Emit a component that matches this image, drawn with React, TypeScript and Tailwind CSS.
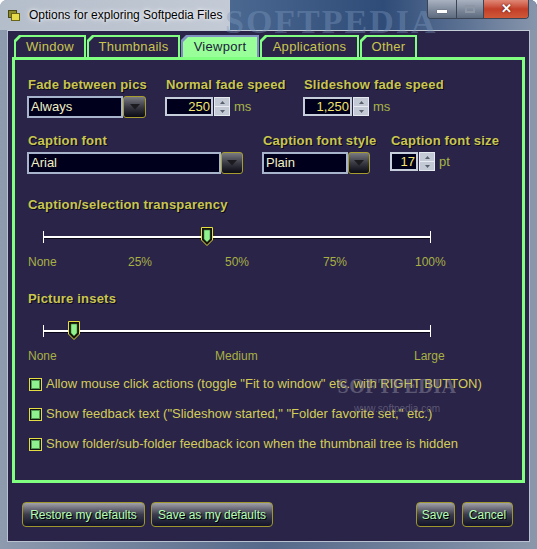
import React from "react";

const LABEL =
  "text-[13px] leading-4 font-bold text-[#c9c64e] tracking-[0.2px] pl-[1px] [text-shadow:1px_1px_0_#0b0920]";

function Combo({ box, btn, value }: { box: string; btn: string; value: string }) {
  return (
    <div className="flex h-[22px]">
      <div
        className={`${box} h-full bg-[#00001c] border-2 border-[#a7b4cc] flex items-center pl-[2px] text-[13px] text-[#f2f0c4]`}
      >
        {value}
      </div>
      <div
        className={`${btn} h-full rounded-[3px] border border-[#a69d2e] bg-gradient-to-b from-[#7a7a82] via-[#3a3a44] to-[#0c0c16] flex items-center justify-center`}
      >
        <svg width="10" height="6" viewBox="0 0 10 6">
          <path d="M0 0 H10 L5 5.5 Z" fill="#1b1b20" />
        </svg>
      </div>
    </div>
  );
}

function Spinner({ box, value, unit }: { box: string; value: string; unit: string }) {
  return (
    <div className="flex items-center h-[19px]">
      <div
        className={`${box} h-full bg-[#00001c] border-2 border-[#c6cedc] flex items-center justify-end pr-[1px] text-[13px] text-[#f2e46c]`}
      >
        {value}
      </div>
      <div className="w-[16px] h-full ml-[1px] flex flex-col border border-[#e4e9f0] bg-[#c3cad6]">
        <div className="flex-1 flex items-center justify-center border-b border-[#e8ecf2]">
          <svg width="5" height="3" viewBox="0 0 5 3">
            <path d="M0 3 H5 L2.5 0 Z" fill="#59606c" />
          </svg>
        </div>
        <div className="flex-1 flex items-center justify-center">
          <svg width="5" height="3" viewBox="0 0 5 3">
            <path d="M0 0 H5 L2.5 3 Z" fill="#59606c" />
          </svg>
        </div>
      </div>
      <span className="ml-[4px] text-[13px] text-[#a9b446]">{unit}</span>
    </div>
  );
}

function Slider({ thumb }: { thumb: number }) {
  return (
    <div className="relative ml-[16px] w-[388px] h-[24px] mt-[9px] pt-[14px]">
      <div className="h-[2px] bg-white shadow-[0_1px_0_#0a0818]" />
      <div className="absolute left-0 top-[9px] w-[1px] h-[12px] bg-white" />
      <div className="absolute right-0 top-[9px] w-[1px] h-[12px] bg-white" />
      <svg
        className="absolute top-[5px]"
        style={{ left: thumb }}
        width="12"
        height="19"
        viewBox="0 0 12 19"
      >
        <path d="M0.5 0.5 H11.5 V13 L6 18.5 L0.5 13 Z" fill="#15130c" stroke="#e6de3e" />
        <path d="M3 3 H9 V12 L6 15 L3 12 Z" fill="#8ff28f" stroke="#3e7a3e" strokeWidth="0.6" />
      </svg>
    </div>
  );
}

function Check({ text }: { text: string }) {
  return (
    <div className="flex items-center h-4 pl-[14px]">
      <div className="w-[13px] h-[13px] border border-[#e4dc44] bg-[#141414] p-[1px]">
        <div className="w-full h-full bg-[#8ef08e] border border-[#4f9a4f]" />
      </div>
      <span className="ml-[4px] text-[13px] text-[#d2cc58]">{text}</span>
    </div>
  );
}

function Tab({ label, w, active }: { label: string; w: string; active?: boolean }) {
  const clip = "[clip-path:polygon(5px_0,100%_0,100%_100%,0_100%,0_5px)]";
  return (
    <div className={`${w} h-[22px] ${active ? "bg-[#7f8fc0]" : "bg-[#82ff82]"} ${clip} pt-[2px] px-[2px]`}>
      <div
        className={`h-full ${active ? "bg-[#99ff99] text-[#1c1a3c]" : "bg-[#2a2448] text-[#c9c64e]"} ${clip} flex items-center justify-center text-[13px] tracking-[0.3px]`}
      >
        {label}
      </div>
    </div>
  );
}

function Btn({ label, w }: { label: string; w: string }) {
  return (
    <div
      className={`${w} h-[25px] rounded-[4px] border border-[#9f972e] bg-gradient-to-b from-[#a2a2aa] via-[#3c3c4c] to-[#12122a] flex items-center justify-center text-[12px] text-[#b4ffb4] [text-shadow:1px_1px_0_#000]`}
    >
      {label}
    </div>
  );
}

export default function App() {
  return (
    <div
      className="relative w-[537px] h-[549px] overflow-hidden rounded-t-[7px] bg-gradient-to-r from-[#8e9aae] via-[#56698a] to-[#8a97ab]"
      style={{ fontFamily: '"Liberation Sans", Arial, sans-serif' }}
    >
      {/* title bar */}
      <div className="relative h-[30px] flex items-center bg-gradient-to-r from-[#b4bdca] via-[#c6cdd8] to-[#3e5a82]">
        <div className="absolute inset-y-0 left-[230px] right-0 bg-gradient-to-r from-[#4a6890] via-[#2f4c78] to-[#8896ac]" />
        <span className="absolute left-[225px] top-[-4px] text-[34px] font-bold tracking-[2px] text-[#7f9ac0]/40 [font-family:'Liberation_Serif',serif]">
          SOFTPEDIA
        </span>
        <svg className="relative ml-[8px]" width="12" height="11" viewBox="0 0 12 11">
          <rect x="0.5" y="0.5" width="8" height="7" fill="#8d8a2a" stroke="#4a4812" />
          <rect x="3.5" y="3.5" width="8" height="7" fill="#e6dc4a" stroke="#6a6418" />
        </svg>
        <span className="relative ml-[9px] text-[12px] text-black [text-shadow:0_0_6px_#fff,0_0_3px_#fff]">
          Options for exploring Softpedia Files
        </span>
        <div className="absolute top-0 left-[427px] flex h-[19px] rounded-b-[4px] border border-t-0 border-[#3a4454] overflow-hidden">
          <div className="w-[29px] bg-gradient-to-b from-[#a9b2c0] to-[#5d6a7e] flex items-center justify-center border-r border-[#3a4454]">
            <div className="w-[10px] h-[3px] bg-white mt-[4px] shadow-[0_0_1px_#222]" />
          </div>
          <div className="w-[27px] bg-gradient-to-b from-[#a9b2c0] to-[#5d6a7e] flex items-center justify-center border-r border-[#3a4454]">
            <div className="w-[10px] h-[8px] border-2 border-[#8c96a4] border-t-[3px]" />
          </div>
          <div className="w-[44px] bg-gradient-to-b from-[#e08878] via-[#c23e28] to-[#d05838] flex items-center justify-center text-white font-bold text-[13px] [text-shadow:0_0_2px_#400]">
            ✕
          </div>
        </div>
      </div>

      {/* client area */}
      <div className="mx-[7px] h-[512px] bg-[#2a2448] border border-[#b8c2d0] border-t-[#c4ccd8]">
        <div className="flex gap-[1px] ml-[6px] mt-[4px]">
          <Tab label="Window" w="w-[72px]" />
          <Tab label="Thumbnails" w="w-[93px]" />
          <Tab label="Viewport" w="w-[78px]" active />
          <Tab label="Applications" w="w-[99px]" />
          <Tab label="Other" w="w-[57px]" />
        </div>

        <div className="ml-[4px] w-[513px] h-[426px] border-[3px] border-[#80ff80] pt-[17px] pl-[12px]">
          {/* row 1 */}
          <div className="flex">
            <div className="w-[138px]">
              <div className={LABEL}>Fade between pics</div>
              <div className="mt-[3px]">
                <Combo box="w-[96px]" btn="w-[23px]" value="Always" />
              </div>
            </div>
            <div className="w-[138px]">
              <div className={LABEL}>Normal fade speed</div>
              <div className="mt-[4px]">
                <Spinner box="w-[48px]" value="250" unit="ms" />
              </div>
            </div>
            <div>
              <div className={LABEL}>Slideshow fade speed</div>
              <div className="mt-[4px]">
                <Spinner box="w-[49px]" value="1,250" unit="ms" />
              </div>
            </div>
          </div>

          {/* row 2 */}
          <div className="flex mt-[15px]">
            <div className="w-[235px]">
              <div className={LABEL}>Caption font</div>
              <div className="mt-[3px]">
                <Combo box="w-[194px]" btn="w-[22px]" value="Arial" />
              </div>
            </div>
            <div className="w-[128px]">
              <div className={LABEL}>Caption font style</div>
              <div className="mt-[3px]">
                <Combo box="w-[86px]" btn="w-[22px]" value="Plain" />
              </div>
            </div>
            <div>
              <div className={LABEL}>Caption font size</div>
              <div className="mt-[3px]">
                <Spinner box="w-[28px]" value="17" unit="pt" />
              </div>
            </div>
          </div>

          {/* transparency */}
          <div className={`${LABEL} mt-[23px]`}>Caption/selection transparency</div>
          <Slider thumb={158} />
          <div className="grid grid-cols-[100px_97px_98px_92px_auto] mt-[9px] ml-[1px] text-[12px] leading-[14px] text-[#a8b044]">
            <span>None</span>
            <span>25%</span>
            <span>50%</span>
            <span>75%</span>
            <span>100%</span>
          </div>

          {/* insets */}
          <div className={`${LABEL} mt-[22px]`}>Picture insets</div>
          <Slider thumb={25} />
          <div className="grid grid-cols-[187px_199px_auto] mt-[9px] ml-[1px] text-[12px] leading-[14px] text-[#a8b044]">
            <span>None</span>
            <span>Medium</span>
            <span>Large</span>
          </div>

          {/* checks */}
          <div className="flex flex-col gap-[14px] mt-[13px] -ml-[12px]">
            <Check text={'Allow mouse click actions (toggle "Fit to window" etc. with RIGHT BUTTON)'} />
            <Check text={'Show feedback text ("Slideshow started," "Folder favorite set," etc.)'} />
            <Check text="Show folder/sub-folder feedback icon when the thumbnail tree is hidden" />
          </div>
        </div>

        <div className="flex items-center mt-[19px] pl-[14px] pr-[16px]">
          <Btn label="Restore my defaults" w="w-[123px]" />
          <div className="ml-[6px]">
            <Btn label="Save as my defaults" w="w-[122px]" />
          </div>
          <div className="ml-auto">
            <Btn label="Save" w="w-[39px]" />
          </div>
          <div className="ml-[7px]">
            <Btn label="Cancel" w="w-[51px]" />
          </div>
        </div>
      </div>

      {/* watermark */}
      <div className="absolute left-[333px] top-[375px] w-[128px] flex flex-col items-center pointer-events-none">
        <span className="text-[20px] leading-[22px] font-bold tracking-[0.5px] text-[#9a98a8]/45 [font-family:'Liberation_Serif',serif]">
          SOFTPEDIA
        </span>
        <span className="mt-[6px] text-[10px] leading-[12px] text-[#9a98a8]/45">www.softpedia.com</span>
      </div>
    </div>
  );
}
